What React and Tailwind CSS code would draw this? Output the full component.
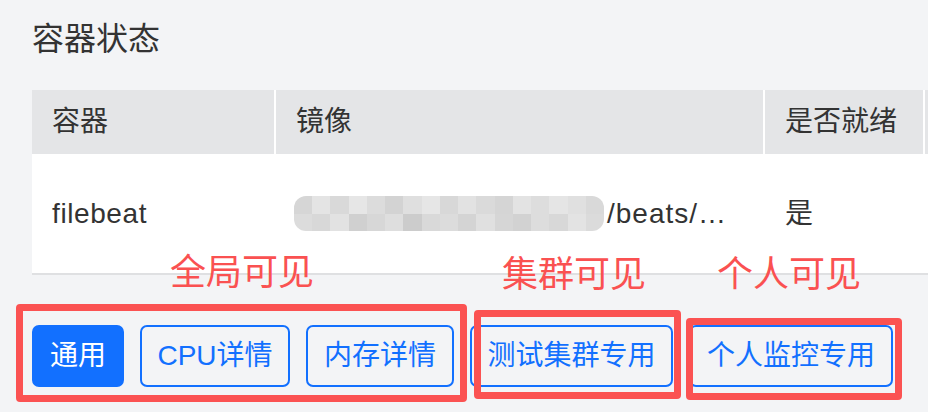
import React from "react";

const font = { fontFamily: '"Liberation Sans", "Noto Sans CJK SC", sans-serif' };

const shades = [
  ["#d6d6d6", "#e4e4e4", "#d9d9d9", "#e6e6e6", "#dcdcdc", "#d3d3d3", "#dfdfdf", "#e6e6e6", "#d8d8d8", "#e2e2e2", "#dadada", "#d5d5d5", "#e3e3e3", "#dddddd", "#e5e5e5", "#e0e0e0", "#d9d9d9"],
  ["#dcdcdc", "#d8d8d8", "#e2e2e2", "#d0d0d0", "#d7d7d7", "#dedede", "#cccccc", "#d9d9d9", "#dcdcdc", "#d4d4d4", "#e0e0e0", "#d6d6d6", "#d2d2d2", "#dddddd", "#d8d8d8", "#e3e3e3", "#dbdbdb"],
];

function Mosaic() {
  return (
    <div className="flex flex-col w-[310px] h-[35px] rounded-[12px] overflow-hidden blur-[0.6px]">
      {shades.map((row, i) => (
        <div key={i} className="flex flex-1">
          {row.map((c, j) => (
            <div key={j} className="flex-1" style={{ backgroundColor: c }} />
          ))}
        </div>
      ))}
    </div>
  );
}

export default function App() {
  return (
    <div
      className="relative w-[928px] h-[412px] overflow-hidden bg-[#f3f4f6] text-[#333333]"
      style={font}
    >
      <div className="pl-8 pt-[19px] h-[90px] text-[32px] leading-[40px]">容器状态</div>

      <div className="ml-8 bg-white">
        <div className="flex gap-[2px] h-[64px] text-[28px]">
          <div className="w-[242px] shrink-0 bg-[#e4e5e7] px-5 flex items-center">容器</div>
          <div className="w-[487px] shrink-0 bg-[#e4e5e7] px-5 flex items-center">镜像</div>
          <div className="w-[158px] shrink-0 bg-[#e4e5e7] px-5 flex items-center">是否就绪</div>
          <div className="flex-1 bg-[#e4e5e7]" />
        </div>
        <div className="flex gap-[2px] h-[121px] text-[28px] border-b-2 border-[#dfe0e2]">
          <div className="w-[242px] shrink-0 px-5 flex items-center tracking-[0.6px]">filebeat</div>
          <div className="w-[487px] shrink-0 pl-[18px] flex items-center">
            <Mosaic />
            <span className="ml-[3px] whitespace-nowrap tracking-[1px]">/beats/…</span>
          </div>
          <div className="w-[158px] shrink-0 px-5 flex items-center">是</div>
          <div className="flex-1" />
        </div>
      </div>

      <div className="flex gap-4 pl-8 mt-[50px] text-[28px]">
        <div className="w-[92px] h-[62px] rounded-[7px] bg-[#1270ff] border-2 border-[#1270ff] text-white flex items-center justify-center">
          通用
        </div>
        <div className="w-[150px] h-[62px] rounded-[7px] border-2 border-[#1270ff] text-[#1270ff] flex items-center justify-center">
          CPU详情
        </div>
        <div className="w-[148px] h-[62px] rounded-[7px] border-2 border-[#1270ff] text-[#1270ff] flex items-center justify-center">
          内存详情
        </div>
        <div className="w-[203px] h-[62px] rounded-[7px] border-2 border-[#1270ff] text-[#1270ff] flex items-center justify-center">
          测试集群专用
        </div>
        <div className="w-[204px] h-[62px] rounded-[7px] border-2 border-[#1270ff] text-[#1270ff] flex items-center justify-center">
          个人监控专用
        </div>
      </div>

      {/* annotation overlays */}
      <div className="absolute left-[170px] top-[255px] text-[36px] leading-[36px] text-[#fa5151] whitespace-nowrap">全局可见</div>
      <div className="absolute left-[502px] top-[257px] text-[36px] leading-[36px] text-[#fa5151] whitespace-nowrap">集群可见</div>
      <div className="absolute left-[717px] top-[257px] text-[36px] leading-[36px] text-[#fa5151] whitespace-nowrap">个人可见</div>

      <div className="absolute left-[16px] top-[304px] w-[451px] h-[98px] border-[7px] border-[#fb5252] rounded-[4px]" />
      <div className="absolute left-[474px] top-[310px] w-[207px] h-[89px] border-[7px] border-[#fb5252] rounded-[4px]" />
      <div className="absolute left-[686px] top-[318px] w-[216px] h-[82px] border-[7px] border-[#fb5252] rounded-[4px]" />
    </div>
  );
}
